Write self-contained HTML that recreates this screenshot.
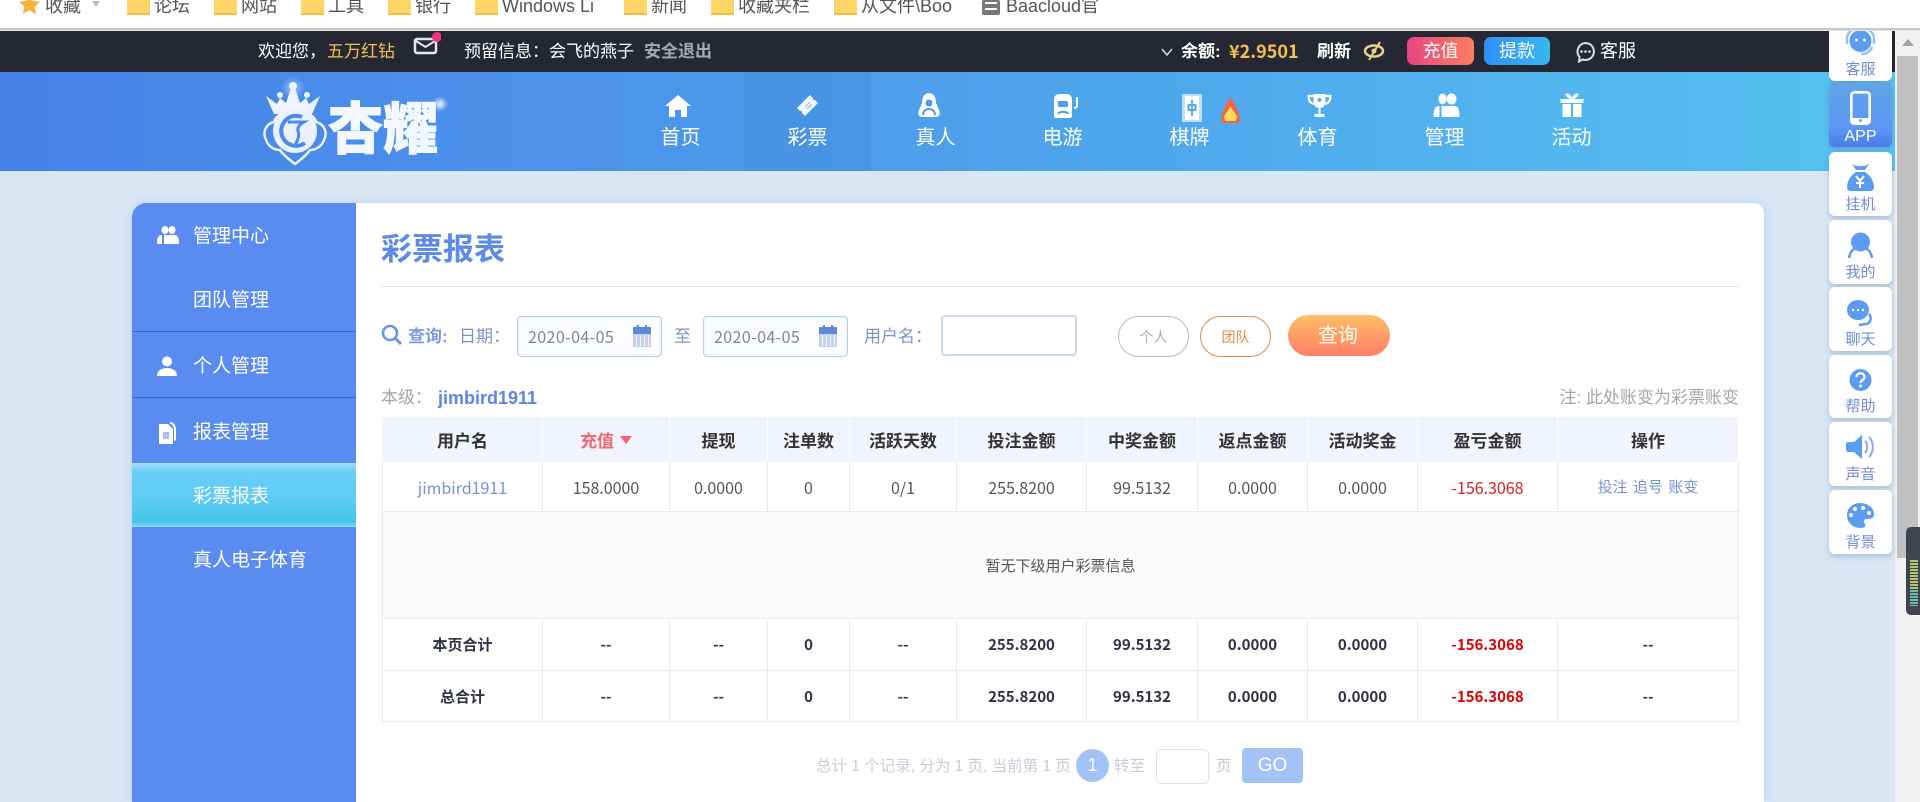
<!DOCTYPE html>
<html lang="zh"><head><meta charset="utf-8"><title>彩票报表</title>
<style>
*{box-sizing:border-box;margin:0;padding:0}
html,body{width:1920px;height:802px;overflow:hidden;background:#d8e7f4;font-family:"Liberation Sans","Noto Sans CJK SC",sans-serif}
.a{position:absolute;white-space:nowrap}
.n{font-family:"Noto Sans CJK SC","Liberation Sans",sans-serif}
.bm{font-size:18px;color:#555;top:-7px;line-height:26px}
.f{position:absolute;top:0;width:23px;height:15px;background:#fdd667;border-bottom:2px solid #efc04e}
.nav{position:absolute;top:72px;width:127px;height:99px;text-align:center;color:#fff;font-size:20px}
.nav span{position:absolute;left:0;right:0;top:52px;line-height:28px}
.ic{position:absolute}
.side{position:absolute;left:132px;width:224px;color:#fff;font-size:19px;line-height:28px;padding-left:61px}
.side svg{position:absolute;left:25px;top:3px}
.ln{position:absolute;left:132px;width:224px;height:1px;background:#3a66cf}
.card{position:absolute;left:1829px;width:63px;background:#fff;border-radius:6px;box-shadow:0 3px 6px rgba(90,120,160,.35);text-align:center;color:#6f8be0;font-size:15px}
.card span{position:absolute;left:0;right:0;bottom:1px;line-height:20px}
.card svg{position:absolute;left:15px;top:10px}
.inp{position:absolute;border:1px solid #b5cdec;border-radius:4px;background:#fbfdff;color:#7d8698;font-size:16px;letter-spacing:.4px;line-height:39px;padding-left:10px;box-shadow:inset 0 0 3px #dce8f8;font-family:"Noto Sans CJK SC",sans-serif}
table{position:absolute;left:382px;top:417px;width:1356px;border-collapse:collapse;table-layout:fixed;color:#555;font-family:"Noto Sans CJK SC","Liberation Sans",sans-serif}
td,th{border:1px solid #e8e9ed;text-align:center;padding:0;font-size:16px}
th{height:44px;background:#f1f4fd;color:#333;font-weight:bold;border-color:#f1f4fd;font-size:17px;border-right-color:#fff}
.r1 td{height:50px}.r2 td{height:107px;background:#fafafa;font-size:15px}.r3 td{font-size:15px;font-weight:bold;color:#2e3247}
.red{color:#d92020}.r3 td.red{color:#e00000}.lnk{color:#7691d6}
</style></head><body>

<!-- browser bookmarks bar -->
<div class="a" style="left:0;top:0;width:1920px;height:30px;background:#fff;border-bottom:2px solid #c9c9c9;overflow:hidden">
<svg class="a" style="left:18px;top:-7px" width="23" height="23" viewBox="0 0 24 24"><path d="M12 1l3.400 7.200 7.600 1-5.600 5.300 1.500 7.700L12 18l-6.900 3.700 1.500-7.700L1 9.200l7.600-1z" fill="#f5b23c"/></svg>
<div class="a bm" style="left:45px">收藏</div>
<div class="a" style="left:92px;top:1px;border:4px solid transparent;border-top:6px solid #bbb"></div>
<i class="f" style="left:127px"></i><div class="a bm" style="left:154px">论坛</div>
<i class="f" style="left:214px"></i><div class="a bm" style="left:241px">网站</div>
<i class="f" style="left:301px"></i><div class="a bm" style="left:328px">工具</div>
<i class="f" style="left:388px"></i><div class="a bm" style="left:415px">银行</div>
<i class="f" style="left:475px"></i><div class="a bm" style="left:502px">Windows Li</div>
<i class="f" style="left:624px"></i><div class="a bm" style="left:651px">新闻</div>
<i class="f" style="left:711px"></i><div class="a bm" style="left:738px">收藏夹栏</div>
<i class="f" style="left:834px"></i><div class="a bm" style="left:861px">从文件\Boo</div>
<div class="a" style="left:982px;top:0;width:18px;height:15px;background:#777;border-radius:2px"><i class="a" style="left:3px;top:2px;width:12px;height:2px;background:#fff"></i><i class="a" style="left:3px;top:8px;width:12px;height:2px;background:#fff"></i></div>
<div class="a bm" style="left:1006px">Baacloud官</div>
</div>

<!-- dark top bar -->
<div class="a" style="left:0;top:31px;width:1895px;height:41px;background:#252833;color:#fff;font-size:17px;line-height:41px">
<div class="a" style="left:258px;top:0">欢迎您，</div>
<div class="a" style="left:327px;top:0;color:#f6c14e;font-size:17px">五万红钻</div>
<svg class="a" style="left:413px;top:0" width="28" height="26" viewBox="0 0 28 26"><rect x="2" y="8" width="21" height="14" rx="2" fill="none" stroke="#e9e9e9" stroke-width="2.500"/><path d="M3 10l9.500 6L22 10" fill="none" stroke="#e9e9e9" stroke-width="2"/><circle cx="24" cy="6" r="5" fill="#f2317f"/></svg>
<div class="a" style="left:464px;top:0">预留信息：会飞的燕子</div>
<div class="a" style="left:644px;top:0;color:#a9a9a9;font-weight:bold">安全退出</div>
<svg class="a" style="left:1161px;top:16px" width="12" height="10" viewBox="0 0 12 10"><path d="M1 2l5 6 5-6" fill="none" stroke="#ddd" stroke-width="1.500"/></svg>
<div class="a" style="left:1181px;top:0;font-weight:bold;font-size:17px">余额:</div>
<div class="a n" style="left:1229px;top:0;color:#f6c14e;font-weight:bold;font-size:18px">¥2.9501</div>
<div class="a" style="left:1317px;top:0;font-weight:bold;font-size:17px">刷新</div>
<svg class="a" style="left:1363px;top:9px" width="23" height="22" viewBox="0 0 23 22"><ellipse cx="11" cy="11" rx="9" ry="5.500" fill="none" stroke="#e8d48c" stroke-width="2.500"/><circle cx="11" cy="11" r="2.500" fill="#e8d48c"/><path d="M17 2L6 20" stroke="#e8d48c" stroke-width="2"/></svg>
<div class="a" style="left:1407px;top:6px;width:67px;height:28px;border-radius:7px;background:linear-gradient(90deg,#e8457f,#fb7d62);text-align:center;line-height:28px;font-size:18px">充值</div>
<div class="a" style="left:1484px;top:6px;width:66px;height:28px;border-radius:7px;background:linear-gradient(90deg,#2f8ff6,#3ab8f2);text-align:center;line-height:28px;font-size:18px">提款</div>
<svg class="a" style="left:1575px;top:10px" width="21" height="22" viewBox="0 0 21 22"><path d="M10.500 2a8.500 8.500 0 1 1-3 16.500L4 20.500l.6-4.500A8.500 8.500 0 0 1 10.500 2z" fill="none" stroke="#ddd" stroke-width="2"/><circle cx="6.500" cy="10.500" r="1.300" fill="#ddd"/><circle cx="10.500" cy="10.500" r="1.300" fill="#ddd"/><circle cx="14.500" cy="10.500" r="1.300" fill="#ddd"/></svg>
<div class="a" style="left:1600px;top:0;font-size:18px">客服</div>
</div>

<!-- nav -->
<div class="a" style="left:0;top:72px;width:1895px;height:99px;background:linear-gradient(90deg,#4781e8 0%,#4c99ea 40%,#55c2f1 100%)"></div>
<div class="a" style="left:744px;top:72px;width:127px;height:99px;background:rgba(60,120,200,.2)"></div>

<!-- logo -->
<svg class="a" style="left:250px;top:72px" width="200" height="99" viewBox="0 0 200 99">
<defs><radialGradient id="gl"><stop offset="0" stop-color="#fff" stop-opacity=".9"/><stop offset="1" stop-color="#fff" stop-opacity="0"/></radialGradient></defs>
<circle cx="43" cy="16" r="12" fill="url(#gl)" opacity=".5"/>
<circle cx="190" cy="32" r="8" fill="url(#gl)"/>
<path d="M16 24l11 8 3-6 6 5 7-21 7 21 6-5 3 6 11-8-8 18H24z" fill="#eef4ff"/>
<circle cx="30" cy="23" r="3" fill="#eef4ff"/><circle cx="57" cy="23" r="3" fill="#eef4ff"/><circle cx="43" cy="14" r="4" fill="#eef4ff"/>
<path d="M45 44C52 38 64 42 66 50 74 52 78 60 74 68 72 74 66 78 60 78 56 84 50 88 45 92 40 88 34 84 30 78 24 78 18 74 16 68 12 60 16 52 24 50 26 42 38 38 45 44z" fill="#4a8ae8" stroke="#eaf1fd" stroke-width="2.500"/>
<circle cx="45" cy="59" r="22" fill="#eaf1fd"/>
<path d="M52 45a15 15 0 1 0 3 26" fill="none" stroke="#4a8ae8" stroke-width="4"/>
<path d="M38 50h16c-5 3-7 6-6 9 2 4 0 9-3 14" fill="none" stroke="#4a8ae8" stroke-width="3"/>
<text x="78" y="77" font-family="Noto Sans CJK SC,sans-serif" font-size="56" font-weight="900" fill="#f3f7ff" stroke="#f3f7ff" stroke-width="1" textLength="110" lengthAdjust="spacingAndGlyphs">杏耀</text>
</svg>

<!-- nav items -->
<div class="nav" style="left:617px"><span>首页</span></div>
<svg class="ic" style="left:665px;top:95px" width="26" height="22" viewBox="0 0 26 22"><path d="M13 0L0 11h4v11h6v-7h6v7h6V11h4z" fill="#fff"/></svg>
<div class="nav" style="left:744px"><span>彩票</span></div>
<svg class="ic" style="left:796px;top:94px" width="23" height="23" viewBox="0 0 23 23"><path d="M1 14L14 1l3 3c-.5 1.500.5 2.500 2 2l3 3L9 22l-3-3c.5-1.500-.5-2.500-2-2z" fill="#f4f8ff"/><path d="M9 13l5-5M11 15l5-5" stroke="#8dbcee" stroke-width="1.200"/></svg>
<div class="nav" style="left:872px"><span>真人</span></div>
<svg class="ic" style="left:917px;top:93px" width="24" height="25" viewBox="0 0 24 25"><path d="M12 0c5 0 7 5 7 10l3 7c2 4 0 7-3 7H5c-3 0-5-3-3-7l3-7C5 5 7 0 12 0z" fill="#fff"/><circle cx="12" cy="10" r="3.500" fill="#4a9cea"/><path d="M6 22c0-4 3-6 6-6s6 2 6 6" fill="none" stroke="#4a9cea" stroke-width="2"/></svg>
<div class="nav" style="left:999px"><span>电游</span></div>
<svg class="ic" style="left:1053px;top:94px" width="26" height="24" viewBox="0 0 26 24"><path d="M7 0h6c4 0 6 2 6 6v16c0 1-1 2-2 2H3c-1 0-2-1-2-2V6c0-4 2-6 6-6z" fill="#fff"/><rect x="5" y="7" width="10" height="6" rx="1" fill="#4d9fec"/><path d="M5 20c2-3 8-3 10 0" fill="none" stroke="#4d9fec" stroke-width="2"/><path d="M24 3v8c0 2-1 3-3 3" fill="none" stroke="#fff" stroke-width="2"/></svg>
<div class="nav" style="left:1126px"><span>棋牌</span></div>
<svg class="ic" style="left:1182px;top:94px" width="20" height="28" viewBox="0 0 20 28"><rect width="20" height="28" fill="#bfdffa"/><rect x="3" y="2" width="14" height="24" fill="#fff"/><path d="M10 6v16M6.500 11h7v5h-7z" stroke="#4d9fec" stroke-width="1.800" fill="none"/></svg>
<svg class="ic" style="left:1220px;top:97px" width="21" height="26" viewBox="0 0 20 25"><path d="M10 0c1 3 4 5 5 9 2 3 4 8 4 13 0 2-1 3-2 3H3c-1 0-2-1-2-3 0-5 2-10 4-13 1-4 4-6 5-9z" fill="#f1664a"/><path d="M10 9c1 3 5 6 6 10 0 3-1 4-2 4H6c-1 0-2-1-2-4 1-4 5-7 6-10z" fill="#fbdd55"/></svg>
<div class="nav" style="left:1254px"><span>体育</span></div>
<svg class="ic" style="left:1307px;top:93px" width="25" height="24" viewBox="0 0 24 24"><path d="M6 1h12v8c0 4-3 6-6 6s-6-2-6-6z" fill="#fff"/><path d="M6 3H1c0 5 2 7 5 8M18 3h5c0 5-2 7-5 8" fill="none" stroke="#fff" stroke-width="2.200"/><circle cx="12" cy="7" r="2" fill="#52aeee"/><rect x="11" y="15" width="2" height="6" fill="#fff"/><rect x="7" y="21" width="10" height="3" fill="#fff"/></svg>
<div class="nav" style="left:1381px"><span>管理</span></div>
<svg class="ic" style="left:1433px;top:93px" width="27" height="24" viewBox="0 0 26 24"><ellipse cx="9" cy="6" rx="4" ry="5.500" fill="#fff"/><ellipse cx="18" cy="6" rx="5" ry="5.500" fill="#fff"/><path d="M0 24c0-7 1-11 6-11v11zM8 24V13h13c4 0 5 4 5 11z" fill="#fff"/></svg>
<div class="nav" style="left:1508px"><span>活动</span></div>
<svg class="ic" style="left:1560px;top:93px" width="24" height="24" viewBox="0 0 23 24"><rect x="0" y="6" width="23" height="4" fill="#fff"/><rect x="2" y="11" width="8.500" height="13" fill="#fff"/><rect x="12.500" y="11" width="8.500" height="13" fill="#fff"/><path d="M11.500 6C7 6 3 1 6 .5s5.500 3 5.500 5.500c0-2.500 2.500-6 5.500-5.500s-1 5.500-5.500 5.500z" fill="#fff"/></svg>

<!-- main panel -->
<div class="a" style="left:132px;top:203px;width:1632px;height:599px;background:#fff;border-radius:14px 10px 0 0;box-shadow:0 0 10px rgba(130,170,210,.35);overflow:hidden">
<div class="a" style="left:0;top:0;width:224px;height:599px;background:#5a8bf1"></div>
<div class="a" style="left:0;top:260px;width:224px;height:64px;background:linear-gradient(180deg,#a8def8 0,#68cdf7 14%,#60cdf6 50%,#45c4ec 92%,#90dcf4 100%)"></div>
</div>

<!-- sidebar -->
<div class="ln" style="top:331px"></div><div class="ln" style="top:397px"></div>
<div class="side" style="top:223px"><svg width="22" height="18" viewBox="0 0 22 18"><ellipse cx="8" cy="4" rx="3.500" ry="4" fill="#fff"/><ellipse cx="15" cy="4" rx="3.500" ry="4" fill="#fff"/><path d="M0 18c0-6 1-9 5-9v9zM7 18V9h10c4 0 5 3 5 9z" fill="#fff"/></svg>管理中心</div>
<div class="side" style="top:287px">团队管理</div>
<div class="side" style="top:353px"><svg width="20" height="20" viewBox="0 0 20 20"><circle cx="10" cy="5.500" r="5" fill="#fff"/><path d="M0 20c0-5 4-8 10-8s10 3 10 8z" fill="#fff"/></svg>个人管理</div>
<div class="side" style="top:419px"><svg width="20" height="23" viewBox="0 0 20 23"><path d="M2 2h9l5 5v15H2z" fill="#fff"/><path d="M13 .5c3 1 5 3 5 7v11" fill="none" stroke="#fff" stroke-width="2"/><rect x="6" y="10" width="6" height="7" fill="#a9bff0"/></svg>报表管理</div>
<div class="side" style="top:483px">彩票报表</div>
<div class="side" style="top:547px">真人电子体育</div>

<!-- content -->
<div class="a" style="left:381px;top:228px;font-size:31px;line-height:44px;font-weight:bold;color:#5d8ae6">彩票报表</div>
<div class="a" style="left:381px;top:286px;width:1358px;height:1px;background:#e4e8ee"></div>

<svg class="a" style="left:381px;top:324px" width="22" height="22" viewBox="0 0 22 22"><circle cx="9" cy="9" r="7" fill="none" stroke="#6b98e6" stroke-width="2.600"/><path d="M14 14l6 6" stroke="#6b98e6" stroke-width="3"/></svg>
<div class="a" style="left:408px;top:324px;font-size:17px;line-height:26px;color:#7b9adb;font-weight:bold">查询:</div>
<div class="a" style="left:459px;top:324px;font-size:17px;line-height:26px;color:#7b93c9">日期：</div>
<div class="inp a" style="left:517px;top:316px;width:145px;height:41px">2020-04-05</div>
<div class="a" style="left:674px;top:324px;font-size:17px;line-height:26px;color:#7b93c9">至</div>
<div class="inp a" style="left:703px;top:316px;width:145px;height:41px">2020-04-05</div>
<svg class="a" style="left:632px;top:324px" width="20" height="24" viewBox="0 0 20 24"><rect x="1" y="5" width="18" height="18" fill="#c4d2ee"/><rect x="1" y="3" width="18" height="7" fill="#6288d8"/><rect x="5" y="1" width="2" height="4" fill="#6288d8"/><rect x="13" y="1" width="2" height="4" fill="#6288d8"/><path d="M4.500 11v11M8.500 11v11M12.500 11v11M16.500 11v11" stroke="#fff" stroke-width=".8"/></svg>
<svg class="a" style="left:818px;top:324px" width="20" height="24" viewBox="0 0 20 24"><rect x="1" y="5" width="18" height="18" fill="#c4d2ee"/><rect x="1" y="3" width="18" height="7" fill="#6288d8"/><rect x="5" y="1" width="2" height="4" fill="#6288d8"/><rect x="13" y="1" width="2" height="4" fill="#6288d8"/><path d="M4.500 11v11M8.500 11v11M12.500 11v11M16.500 11v11" stroke="#fff" stroke-width=".8"/></svg>
<div class="a" style="left:864px;top:324px;font-size:17px;line-height:26px;color:#7b93c9">用户名：</div>
<div class="a" style="left:941px;top:315px;width:136px;height:41px;border:2px solid #c9d9ee;border-radius:4px;background:#fff"></div>
<div class="a" style="left:1118px;top:316px;width:71px;height:41px;border:1px solid #bbb;border-radius:21px;text-align:center;line-height:41px;font-size:14px;color:#aaa">个人</div>
<div class="a" style="left:1200px;top:316px;width:71px;height:41px;border:1px solid #e08a48;border-radius:21px;text-align:center;line-height:41px;font-size:14px;color:#e08a48">团队</div>
<div class="a" style="left:1288px;top:315px;width:102px;height:41px;border-radius:21px;background:linear-gradient(180deg,#ffbd66,#ff7f66);text-align:center;line-height:43px;font-size:20px;color:#fff;padding-right:2px">查询</div>

<div class="a" style="left:381px;top:385px;font-size:17px;line-height:26px;color:#a5a5a5">本级：</div>
<div class="a" style="left:438px;top:385px;font-size:18px;line-height:26px;font-weight:bold;color:#5d86e4">jimbird1911</div>
<div class="a" style="right:181px;top:385px;font-size:17px;line-height:26px;color:#a5a5a5">注: 此处账变为彩票账变</div>

<table>
<colgroup><col style="width:160px"><col style="width:127px"><col style="width:98px"><col style="width:82px"><col style="width:107px"><col style="width:130px"><col style="width:111px"><col style="width:110px"><col style="width:110px"><col style="width:140px"><col style="width:181px"></colgroup>
<tr><th>用户名</th><th style="color:#f2686e">充值 <i style="display:inline-block;border:6px solid transparent;border-top:8px solid #f2686e;border-bottom:0;margin-left:2px;position:relative;top:-3px"></i></th><th>提现</th><th>注单数</th><th>活跃天数</th><th>投注金额</th><th>中奖金额</th><th>返点金额</th><th>活动奖金</th><th>盈亏金额</th><th>操作</th></tr>
<tr class="r1"><td class="lnk">jimbird1911</td><td>158.0000</td><td>0.0000</td><td>0</td><td>0/1</td><td>255.8200</td><td>99.5132</td><td>0.0000</td><td>0.0000</td><td class="red">-156.3068</td><td class="lnk" style="font-size:15px;word-spacing:2px">投注 追号 账变</td></tr>
<tr class="r2"><td colspan="11">暂无下级用户彩票信息</td></tr>
<tr class="r3" style="height:52px"><td>本页合计</td><td>--</td><td>--</td><td>0</td><td>--</td><td>255.8200</td><td>99.5132</td><td>0.0000</td><td>0.0000</td><td class="red">-156.3068</td><td>--</td></tr>
<tr class="r3" style="height:51px"><td>总合计</td><td>--</td><td>--</td><td>0</td><td>--</td><td>255.8200</td><td>99.5132</td><td>0.0000</td><td>0.0000</td><td class="red">-156.3068</td><td>--</td></tr>
</table>

<!-- pagination -->
<div class="a" style="left:816px;top:756px;font-size:15.500px;line-height:22px;color:#c6ccd8">总计 1 个记录, 分为 1 页, 当前第 1 页</div>
<div class="a" style="left:1076px;top:749px;width:33px;height:33px;border-radius:50%;background:#a3c2f6;color:#fff;text-align:center;line-height:33px;font-size:18px">1</div>
<div class="a" style="left:1114px;top:756px;font-size:15.500px;line-height:22px;color:#c6ccd8">转至</div>
<div class="a" style="left:1156px;top:749px;width:53px;height:35px;border:1px solid #dfe3ea;border-radius:5px;background:#fff"></div>
<div class="a" style="left:1216px;top:756px;font-size:15.500px;line-height:22px;color:#c6ccd8">页</div>
<div class="a" style="left:1242px;top:748px;width:61px;height:35px;border-radius:4px;background:#a3c2f6;color:#fff;text-align:center;line-height:35px;font-size:19px">GO</div>

<!-- scrollbar -->
<div class="a" style="left:1895px;top:31px;width:25px;height:771px;background:#f1f1f1"></div>
<div class="a" style="left:1897px;top:56px;width:21px;height:502px;background:#c1c1c1"></div>
<div class="a" style="left:1902px;top:39px;border:6px solid transparent;border-top:0;border-bottom:7px solid #a3a3a3"></div>
<div class="a" style="left:1906px;top:527px;width:14px;height:88px;background:#3f4450;border-radius:5px 0 0 5px"></div>
<div class="a" style="left:1910px;top:560px;width:8px;height:46px;background:repeating-linear-gradient(180deg,#b7c56c 0 2px,#3f4450 2px 3px)"></div>
<div class="a" style="left:1910px;top:590px;width:8px;height:16px;background:repeating-linear-gradient(180deg,#6cbfa8 0 2px,#3f4450 2px 3px)"></div>

<!-- floating side cards -->
<div class="a" style="left:1829px;top:31px;width:63px;height:54px;overflow:hidden">
<div class="card" style="left:0;top:-14px;height:64px"><svg width="33" height="34" viewBox="0 0 33 34"><circle cx="16.500" cy="14" r="11" fill="#5c9cf0"/><path d="M3 17V12C3 5 9 1 16.500 1S30 5 30 12v5M28 20c-2 5-6 7-11 7" fill="none" stroke="#8fc4f5" stroke-width="2.500"/><circle cx="12.500" cy="13" r="1.500" fill="#fff"/><circle cx="20.500" cy="13" r="1.500" fill="#fff"/></svg><span>客服</span></div></div>
<div class="card" style="top:83px;height:64px;background:linear-gradient(180deg,#60a5e4,#5d97f5 70%,#4a7be8);color:#fff"><svg style="left:21px;top:8px" width="21" height="34" viewBox="0 0 21 34"><rect x="1.300" y="1.300" width="18.400" height="31.400" rx="3" fill="none" stroke="#fff" stroke-width="2.600"/><rect x="1.300" y="27" width="18.400" height="6" fill="#fff"/><circle cx="10.500" cy="29.500" r="1.500" fill="#6aa0f0"/></svg><span style="font-size:16px;bottom:0">APP</span></div>
<div class="card" style="top:152px;height:64px"><svg width="33" height="32" viewBox="0 0 33 32"><path d="M8 2c5 3 12 3 17 0l-4 6h-9z" fill="#5c9cf0"/><path d="M12 10h9c6 4 9 10 9 15 0 3-2 4-4 4H7c-2 0-4-1-4-4 0-5 3-11 9-15z" fill="#5c9cf0"/><path d="M12 14l4 5 4-5M16 19v7M12 21h8" stroke="#fff" stroke-width="2" fill="none"/></svg><span>挂机</span></div>
<div class="card" style="top:220px;height:64px"><svg width="33" height="32" viewBox="0 0 33 32"><circle cx="16.500" cy="12" r="9.500" fill="#5c9cf0"/><path d="M5 28c1-6 4-9 7-10M28 28c-1-6-4-9-7-10" fill="none" stroke="#5c9cf0" stroke-width="2.500"/></svg><span>我的</span></div>
<div class="card" style="top:287px;height:64px"><svg width="33" height="32" viewBox="0 0 33 32"><ellipse cx="14" cy="13" rx="11" ry="10" fill="#5c9cf0"/><path d="M25 17c3 4 2 9-3 10l-7 1" fill="none" stroke="#5c9cf0" stroke-width="2.500"/><circle cx="9" cy="13" r="1.200" fill="#fff"/><circle cx="14" cy="13" r="1.200" fill="#fff"/><circle cx="19" cy="13" r="1.200" fill="#fff"/></svg><span>聊天</span></div>
<div class="card" style="top:355px;height:63px"><svg width="33" height="32" viewBox="0 0 33 32"><circle cx="16.500" cy="15" r="11" fill="#5c9cf0"/><path d="M12.500 12c0-5 8-5 8 0 0 3-4 3-4 6" fill="none" stroke="#fff" stroke-width="2.200"/><circle cx="16.500" cy="21" r="1.500" fill="#fff"/></svg><span>帮助</span></div>
<div class="card" style="top:422px;height:64px"><svg width="33" height="32" viewBox="0 0 33 32"><path d="M4 10h6l8-7v24l-8-7H4c-1 0-2-1-2-2v-6c0-1 1-2 2-2z" fill="#5c9cf0"/><path d="M21 9c3 3 3 9 0 12M25 5c5 5 5 15 0 20" fill="none" stroke="#7fa9ee" stroke-width="2"/></svg><span>声音</span></div>
<div class="card" style="top:490px;height:64px"><svg width="33" height="32" viewBox="0 0 33 32"><path d="M16 3c8 0 14 5 14 11 0 5-5 5-8 5-2 0-3 3-1 5 1 2 0 4-4 4C8 28 3 22 3 15S9 3 16 3z" fill="#5c9cf0"/><circle cx="11" cy="9" r="2" fill="#fff"/><circle cx="19" cy="8" r="2" fill="#fff"/><circle cx="25" cy="13" r="2" fill="#fff"/><circle cx="7" cy="15" r="2" fill="#fff"/></svg><span>背景</span></div>
</body></html>
